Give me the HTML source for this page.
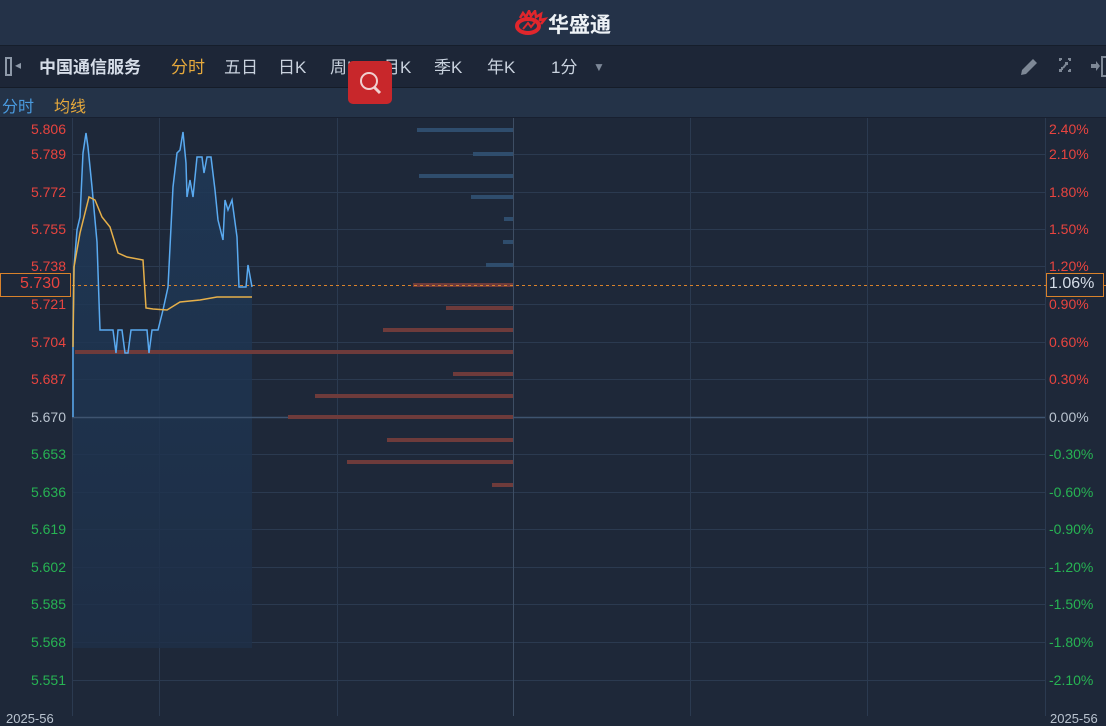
<!DOCTYPE html>
<html><head><meta charset="utf-8"><style>
*{margin:0;padding:0;box-sizing:border-box}
body{width:1106px;height:716px;overflow:hidden;background:#1e2839;font-family:"Liberation Sans","Noto Sans CJK SC",sans-serif;position:relative}
.hdr{position:absolute;left:0;top:0;width:1106px;height:45px;background:#243248}
.tb{position:absolute;left:0;top:45px;width:1106px;height:43px;background:#1d2637;border-top:1px solid #161e2b;border-bottom:1px solid #151c28}
.sb{position:absolute;left:0;top:88px;width:1106px;height:30px;background:#243348;border-bottom:1px solid #182030}
.t{position:absolute;white-space:nowrap}
.tbi{top:53px;font-size:17px;color:#c9d2de}
.pl{position:absolute;right:1040px;font-size:14px;text-align:right;line-height:16px}
.pr{position:absolute;left:1049px;font-size:14px;line-height:16px}
.r{color:#e8443f}.g{color:#27b353}.w{color:#b9c3cf}
</style></head><body>
<div class="hdr"></div>
<svg style="position:absolute;left:514px;top:10px" width="34" height="26" viewBox="0 0 34 26">
<path d="M6 8 L9 3 L12 7 L15 1 L17 6 L21 1 L22 7 L27 4 L26 10 L31 9 L27 14" fill="none" stroke="#e0262c" stroke-width="2.5"/>
<ellipse cx="14" cy="16" rx="11" ry="7" fill="none" stroke="#e0262c" stroke-width="4"/>
<path d="M9 19 L14 13 L17 17 L21 12" fill="none" stroke="#e0262c" stroke-width="2"/>
</svg>
<div class="t" style="left:548px;top:9px;font-size:21px;font-weight:bold;color:#eef2f6">华盛通</div>
<div class="tb"></div>
<div class="t" style="left:5px;top:57px;width:7px;height:19px;border:2px solid #8e99a8"></div>
<div class="t" style="left:15px;top:58px;color:#8e99a8;font-size:12px">◂</div>
<div class="t tbi" style="left:39px;font-weight:bold;color:#d6dde8">中国通信服务</div>
<div class="t tbi" style="left:171px;color:#e6a93c">分时</div>
<div class="t tbi" style="left:224px">五日</div>
<div class="t tbi" style="left:278px">日K</div>
<div class="t tbi" style="left:330px">周K</div>
<div class="t tbi" style="left:383px">月K</div>
<div class="t tbi" style="left:434px">季K</div>
<div class="t tbi" style="left:487px">年K</div>
<div class="t tbi" style="left:551px">1分</div>
<div class="t" style="left:593px;top:60px;color:#7d8898;font-size:12px">▼</div>
<svg style="position:absolute;left:1018px;top:56px" width="88" height="22" viewBox="0 0 88 22">
<path d="M3 19 L4 14 L15 3 L19 7 L8 18 Z" fill="#7e8896"/>
<g stroke="#7e8896" stroke-width="2" fill="none"><path d="M42 5 L42 3 L44 3 M50 3 L52 3 L52 5 M52 13 L52 15 L50 15 M44 15 L42 15 L42 13"/><path d="M45 12 L49 7 M47 7 L49 7 L49 9 M44 14 L44 11"/></g>
<path d="M73 8 L78 8 L78 5 L82 10 L78 15 L78 12 L73 12 Z" fill="#7e8896"/>
<rect x="84" y="1" width="6" height="19" fill="none" stroke="#7e8896" stroke-width="2"/>
</svg>
<div class="sb"></div>
<div class="t" style="left:2px;top:93px;font-size:16px;color:#4a9be0">分时</div>
<div class="t" style="left:54px;top:93px;font-size:16px;color:#e6a93c">均线</div>
<div class="t" style="left:348px;top:61px;width:44px;height:43px;background:#c8272b;border-radius:5px"></div>
<svg style="position:absolute;left:348px;top:61px" width="44" height="43"><circle cx="21" cy="20" r="8" fill="none" stroke="#f0d0d0" stroke-width="2"/><path d="M26 26 L32 32" stroke="#f0d0d0" stroke-width="3"/></svg>

<svg style="position:absolute;left:0;top:118px" width="1106" height="598" viewBox="0 118 1106 598">
<defs><linearGradient id="fg" x1="0" y1="0" x2="0" y2="1"><stop offset="0" stop-color="#1f3a5a"/><stop offset="1" stop-color="#1e2f48"/></linearGradient></defs>
<g stroke="#2b3a50" stroke-width="1">
<line x1="72" y1="154.5" x2="1045" y2="154.5"/><line x1="72" y1="192.5" x2="1045" y2="192.5"/><line x1="72" y1="229.5" x2="1045" y2="229.5"/><line x1="72" y1="266.5" x2="1045" y2="266.5"/><line x1="72" y1="304.5" x2="1045" y2="304.5"/><line x1="72" y1="342.5" x2="1045" y2="342.5"/><line x1="72" y1="379.5" x2="1045" y2="379.5"/><line x1="72" y1="454.5" x2="1045" y2="454.5"/><line x1="72" y1="492.5" x2="1045" y2="492.5"/><line x1="72" y1="529.5" x2="1045" y2="529.5"/><line x1="72" y1="567.5" x2="1045" y2="567.5"/><line x1="72" y1="604.5" x2="1045" y2="604.5"/><line x1="72" y1="642.5" x2="1045" y2="642.5"/><line x1="72" y1="680.5" x2="1045" y2="680.5"/>
<line x1="159.5" y1="118" x2="159.5" y2="716"/><line x1="337.5" y1="118" x2="337.5" y2="716"/><line x1="690.5" y1="118" x2="690.5" y2="716"/><line x1="867.5" y1="118" x2="867.5" y2="716"/><line x1="1045.5" y1="118" x2="1045.5" y2="716"/><line x1="72.5" y1="118" x2="72.5" y2="716"/>
</g>
<line x1="513.5" y1="118" x2="513.5" y2="716" stroke="#3e4e64"/>
<polygon fill="url(#fg)" opacity="0.8" points="73,648 73,417 73,330 74,267 77,230 80,217 83,153 86,133 88,147 92,187 97,242 100,330 113,330 116,353 118,330 122,330 125,353 128,353 131,330 147,330 149,353 152,330 158,330 163,310 168,287 173,187 177,153 180,150 183,132 186,163 187,197 190,180 193,197 197,157 202,157 204,173 207,157 211,157 215,190 218,220 223,240 225,200 228,210 232,200 237,237 239,287 246,287 248,265 252,287 252,648"/>
<line x1="72" y1="417.5" x2="1045" y2="417.5" stroke="#3e5470" stroke-width="1.5"/>
<g fill="#2f4d6d">
<rect x="417" y="128" width="96" height="4"/><rect x="473" y="152" width="40" height="4"/><rect x="419" y="174" width="94" height="4"/><rect x="471" y="195" width="42" height="4"/><rect x="504" y="217" width="9" height="4"/><rect x="503" y="240" width="10" height="4"/><rect x="486" y="263" width="27" height="4"/>
</g>
<g fill="#6e3b3b">
<rect x="413" y="283" width="100" height="4"/><rect x="446" y="306" width="67" height="4"/><rect x="383" y="328" width="130" height="4"/><rect x="75" y="350" width="438" height="4"/><rect x="453" y="372" width="60" height="4"/><rect x="315" y="394" width="198" height="4"/><rect x="288" y="415" width="225" height="4"/><rect x="387" y="438" width="126" height="4"/><rect x="347" y="460" width="166" height="4"/><rect x="492" y="483" width="21" height="4"/>
</g>
<line x1="0" y1="285.5" x2="1106" y2="285.5" stroke="#d9822b" stroke-dasharray="3,3"/>
<polyline fill="none" stroke="#5aaaf0" stroke-width="1.5" points="73,417 73,330 74,267 77,230 80,217 83,153 86,133 88,147 92,187 97,242 100,330 113,330 116,353 118,330 122,330 125,353 128,353 131,330 147,330 149,353 152,330 158,330 163,310 168,287 173,187 177,153 180,150 183,132 186,163 187,197 190,180 193,197 197,157 202,157 204,173 207,157 211,157 215,190 218,220 223,240 225,200 228,210 232,200 237,237 239,287 246,287 248,265 252,287"/>
<polyline fill="none" stroke="#e6b04a" stroke-width="1.5" points="73,347 74,267 80,233 89,197 95,200 102,217 110,227 118,253 127,257 143,260 146,308 153,309 167,310 180,302 200,300 217,297 252,297"/>
</svg>
<div class="t" style="left:0;top:273px;width:71px;height:24px;border:1px solid #d9822b;background:#1e2839"></div>
<div class="t" style="left:1046px;top:273px;width:58px;height:24px;border:1px solid #d9822b;background:#1e2839"></div>
<div class="t r" style="left:20px;top:275px;font-size:16px">5.730</div>
<div class="t" style="left:1049px;top:275px;font-size:16px;color:#d6dde8">1.06%</div>

<div class="pl r" style="top:121px">5.806</div><div class="pl r" style="top:146px">5.789</div><div class="pl r" style="top:184px">5.772</div><div class="pl r" style="top:221px">5.755</div><div class="pl r" style="top:258px">5.738</div><div class="pl r" style="top:296px">5.721</div><div class="pl r" style="top:334px">5.704</div><div class="pl r" style="top:371px">5.687</div><div class="pl w" style="top:409px">5.670</div><div class="pl g" style="top:446px">5.653</div><div class="pl g" style="top:484px">5.636</div><div class="pl g" style="top:521px">5.619</div><div class="pl g" style="top:559px">5.602</div><div class="pl g" style="top:596px">5.585</div><div class="pl g" style="top:634px">5.568</div><div class="pl g" style="top:672px">5.551</div>
<div class="pr r" style="top:121px">2.40%</div><div class="pr r" style="top:146px">2.10%</div><div class="pr r" style="top:184px">1.80%</div><div class="pr r" style="top:221px">1.50%</div><div class="pr r" style="top:258px">1.20%</div><div class="pr r" style="top:296px">0.90%</div><div class="pr r" style="top:334px">0.60%</div><div class="pr r" style="top:371px">0.30%</div><div class="pr w" style="top:409px">0.00%</div><div class="pr g" style="top:446px">-0.30%</div><div class="pr g" style="top:484px">-0.60%</div><div class="pr g" style="top:521px">-0.90%</div><div class="pr g" style="top:559px">-1.20%</div><div class="pr g" style="top:596px">-1.50%</div><div class="pr g" style="top:634px">-1.80%</div><div class="pr g" style="top:672px">-2.10%</div>
<div class="t w" style="left:6px;top:711px;font-size:13px">2025-56</div>
<div class="t w" style="left:1050px;top:711px;font-size:13px">2025-56</div>
</body></html>
